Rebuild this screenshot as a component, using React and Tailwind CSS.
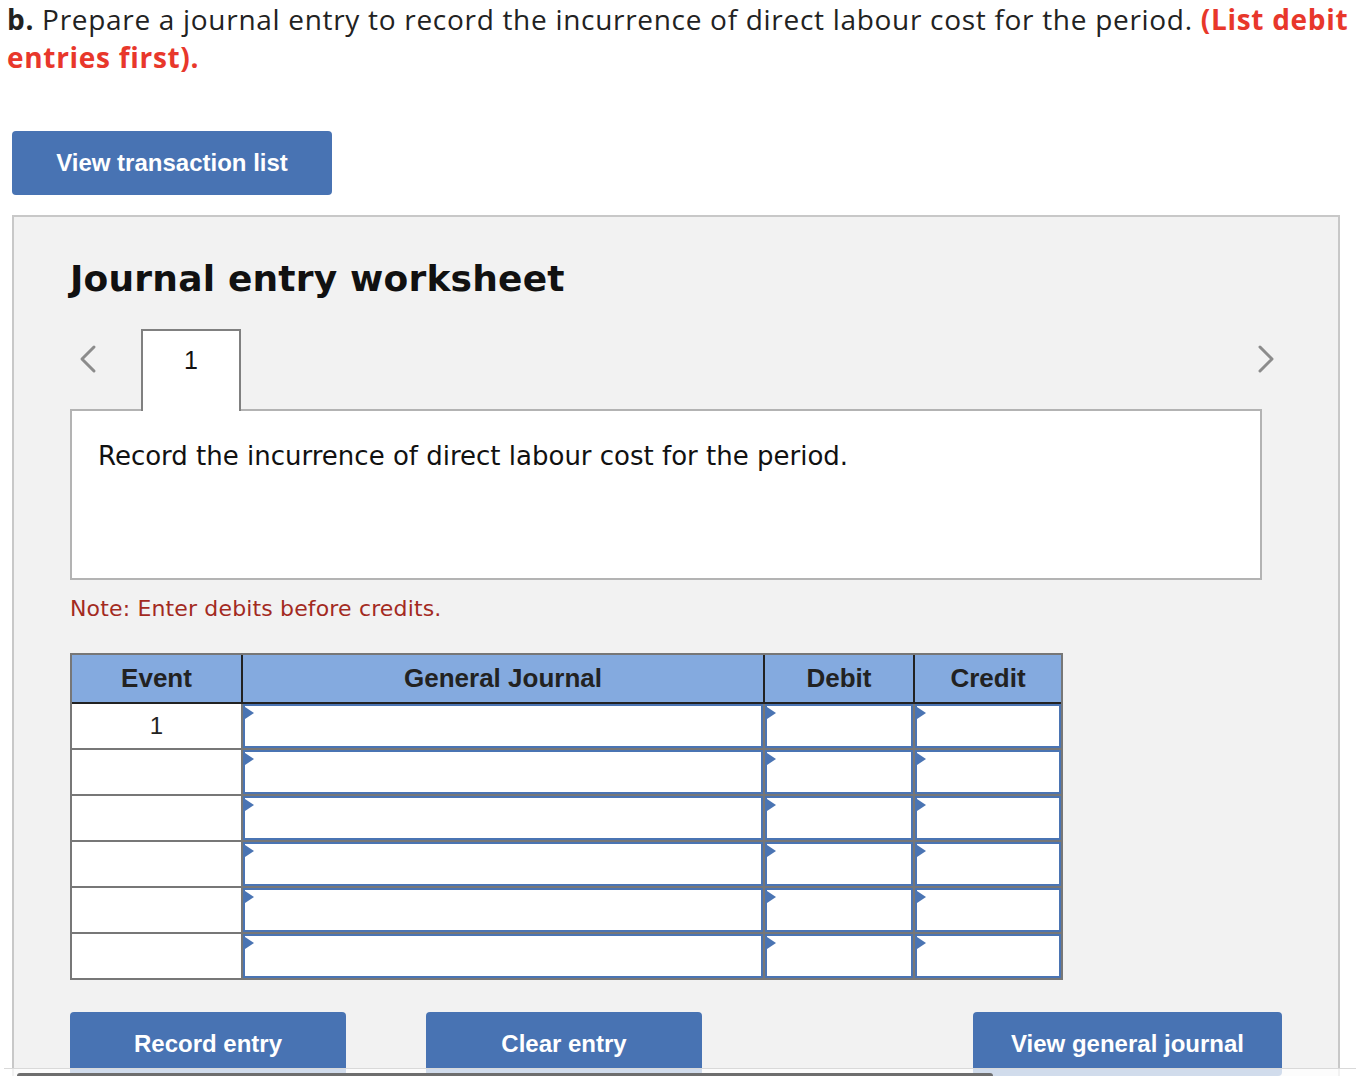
import React from "react";

const Tri = () => (
  <svg className="absolute left-0 top-[1px]" width="10" height="12" viewBox="0 0 10 12">
    <polygon points="0,0 9,6 0,12" fill="#4a74b3" />
  </svg>
);

const InputCell = ({ w }) => (
  <div className={`relative h-full bg-white border-2 border-[#4a74b3] ${w}`}>
    <Tri />
  </div>
);

function Row({ first, last }) {
  return (
    <div className={`flex ${last ? "h-[44px]" : "h-[46px] border-b-2 border-[#777]"}`}>
      <div className="w-[169px] h-full bg-white flex items-center justify-center text-[24px] text-[#222] [font-family:'Liberation_Sans',Arial,sans-serif]">
        {first ? "1" : ""}
      </div>
      <div className="w-[2px] h-full bg-[#777]" />
      <InputCell w="w-[520px]" />
      <div className="w-[2px] h-full bg-[#777]" />
      <InputCell w="w-[148px]" />
      <div className="w-[2px] h-full bg-[#777]" />
      <InputCell w="w-[146px]" />
    </div>
  );
}

const Btn = ({ children, w }) => (
  <div
    className={`h-[64px] ${w} bg-[#4873b3] rounded-[4px] flex items-center justify-center text-white font-bold text-[24px] [font-family:'Liberation_Sans',Arial,sans-serif]`}
  >
    {children}
  </div>
);

export default function App() {
  return (
    <div className="relative w-[1356px] h-[1076px] overflow-hidden bg-white">
      <div className="pl-[7px] text-[28px] leading-[38px] text-[#222] [font-family:'Open_Sans','Liberation_Sans',sans-serif] whitespace-nowrap tracking-[0.7px]">
        <p>
          <span className="font-bold">b.</span> Prepare a journal entry to record the incurrence of direct labour cost for the period.{" "}
          <span className="font-bold text-[#e8372b]">(List debit</span>
        </p>
        <p className="font-bold text-[#e8372b]">entries first).</p>
      </div>

      <div className="mt-[55px] ml-[12px] w-[320px] h-[64px] bg-[#4873b3] rounded-[4px] flex items-center justify-center text-white font-bold text-[24px] [font-family:'Liberation_Sans',Arial,sans-serif]">
        View transaction list
      </div>

      <div className="mt-[20px] ml-[12px] w-[1328px] h-[900px] border-2 border-[#c8c8c8] bg-[#f2f2f2] pl-[56px]">
        <h2 className="mt-[40px] text-[36px] leading-[44px] font-bold text-[#111] [font-family:'DejaVu_Sans',Verdana,sans-serif] tracking-[0.2px]">
          Journal entry worksheet
        </h2>

        <div className="mt-[28px] w-[1220px] flex items-start">
          <div className="w-[71px] pl-[8px] pt-[15px]">
            <svg width="20" height="30" viewBox="0 0 20 30">
              <polyline points="16,3 4,15 16,27" fill="none" stroke="#8c8c8c" strokeWidth="3" strokeLinecap="round" strokeLinejoin="round" />
            </svg>
          </div>
          <div className="relative z-10 w-[100px] h-[82px] bg-white border-2 border-b-0 border-[#808080] flex justify-center pt-[14px] text-[25px] leading-[30px] text-[#111] [font-family:'Liberation_Sans',Arial,sans-serif]">
            1
          </div>
          <div className="ml-auto mr-[14px] pt-[15px]">
            <svg width="20" height="30" viewBox="0 0 20 30">
              <polyline points="4,3 16,15 4,27" fill="none" stroke="#8c8c8c" strokeWidth="3" strokeLinecap="round" strokeLinejoin="round" />
            </svg>
          </div>
        </div>

        <div className="-mt-[2px] w-[1192px] h-[171px] bg-white border-2 border-[#b3b3b3] pl-[26px] pt-[29px]">
          <p className="text-[26px] leading-[32px] text-[#111] [font-family:'DejaVu_Sans',Verdana,sans-serif]">
            Record the incurrence of direct labour cost for the period.
          </p>
        </div>

        <p className="mt-[15px] text-[22px] leading-[28px] text-[#a32a1f] [font-family:'DejaVu_Sans',Verdana,sans-serif] tracking-[0.15px]">
          Note: Enter debits before credits.
        </p>

        <div className="mt-[30px] w-[993px] border-2 border-[#777] bg-[#777]">
          <div className="flex h-[49px] bg-[#84aadf] border-b-2 border-[#222] text-[26px] font-bold text-[#222] [font-family:'Liberation_Sans',Arial,sans-serif]">
            <div className="w-[169px] flex items-center justify-center">Event</div>
            <div className="w-[2px] bg-[#222]" />
            <div className="w-[520px] flex items-center justify-center">General Journal</div>
            <div className="w-[2px] bg-[#222]" />
            <div className="w-[148px] flex items-center justify-center">Debit</div>
            <div className="w-[2px] bg-[#222]" />
            <div className="w-[146px] flex items-center justify-center">Credit</div>
          </div>
          <Row first />
          <Row />
          <Row />
          <Row />
          <Row />
          <Row last />
        </div>

        <div className="mt-[32px] flex">
          <Btn w="w-[276px]">Record entry</Btn>
          <div className="ml-[80px]">
            <Btn w="w-[276px]">Clear entry</Btn>
          </div>
          <div className="ml-[271px]">
            <Btn w="w-[309px]">View general journal</Btn>
          </div>
        </div>
      </div>

      <div className="absolute left-[4px] right-0 top-[1068px] h-[8px] bg-white/75 border-t border-[#d9d9d9]" />
      <div className="absolute left-[17px] w-[976px] top-[1073px] h-[6px] rounded-full bg-[#6e6e6e]" />
    </div>
  );
}
